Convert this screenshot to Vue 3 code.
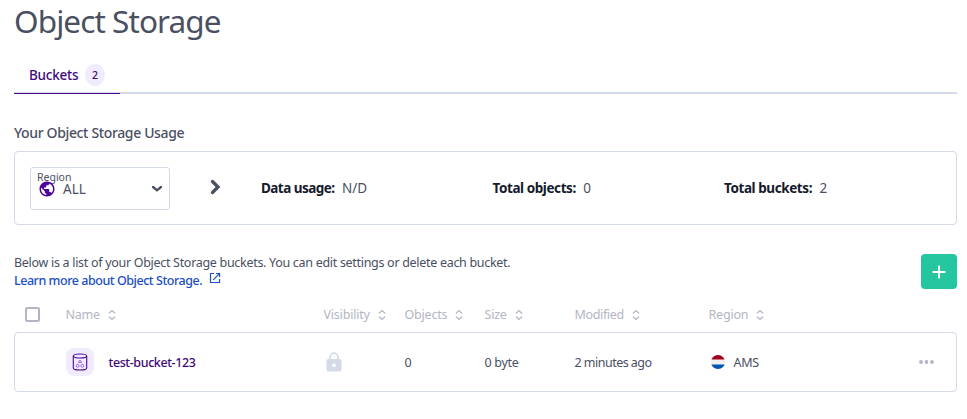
<script setup>
const stats = [
  { label: 'Data usage:', value: 'N/D', cls: 's-data' },
  { label: 'Total objects:', value: '0', cls: 's-objects' },
  { label: 'Total buckets:', value: '2', cls: 's-buckets' },
]
const columns = ['Name', 'Visibility', 'Objects', 'Size', 'Modified', 'Region']
</script>

<template>
  <main class="page">
    <h1><span>Object Storage</span></h1>
    <nav class="tabs">
      <div class="tab"><span class="tab-label">Buckets</span><span class="count">2</span></div>
    </nav>

    <h2><span>Your Object Storage Usage</span></h2>
    <section class="usage">
      <div class="select">
        <div class="select-label">Region</div>
        <div class="select-row">
          <svg class="globe" width="18" height="18" viewBox="0 0 24 24"><path fill="#4f0599" d="M12 2C6.48 2 2 6.48 2 12s4.48 10 10 10 10-4.48 10-10S17.52 2 12 2zm-1 17.93c-3.95-.49-7-3.85-7-7.93 0-.62.08-1.21.21-1.79L9 15v1c0 1.1.9 2 2 2v1.93zm6.9-2.54c-.26-.81-1-1.39-1.9-1.39h-1v-3c0-.55-.45-1-1-1H8v-2h2c.55 0 1-.45 1-1V7h2c1.1 0 2-.9 2-2v-.41c2.93 1.19 5 4.06 5 7.41 0 2.08-.8 3.97-2.1 5.39z"/></svg>
          <span class="all">ALL</span>
          <svg class="down" width="12" height="8" viewBox="0 0 12 8"><path d="M2 2l4 3.300L10 2" fill="none" stroke="#4a4f62" stroke-width="2.300" stroke-linecap="round"/></svg>
        </div>
      </div>
      <svg class="next" width="12" height="16" viewBox="0 0 12 16"><path d="M2.500 2.500L8 8l-5.500 5.500" fill="none" stroke="#4a4f62" stroke-width="3.300" stroke-linecap="round"/></svg>
      <div class="stats">
        <div v-for="s in stats" :key="s.label" class="stat" :class="s.cls"><strong>{{ s.label }}</strong><span>{{ s.value }}</span></div>
      </div>
    </section>

    <div class="intro">
      <div class="copy">
        <div class="desc">Below is a list of your Object Storage buckets. You can edit settings or delete each bucket.</div>
        <a class="learn"><span>Learn more about Object Storage.</span>
          <svg width="12" height="12" viewBox="0 0 12 12" fill="none" stroke="#1b4fc4" stroke-width="1.200"><path d="M5 1.500H1.500v9h9V7M7 1.500h3.600V5M10.400 1.700L4.300 7.800"/></svg>
        </a>
      </div>
      <button class="add"><svg width="14" height="14" viewBox="0 0 14 14"><path d="M7 .5v13M.5 7h13" stroke="#fff" stroke-width="2"/></svg></button>
    </div>

    <div class="grid head">
      <span class="box"></span>
      <div v-for="c in columns" :key="c" class="col" :class="'h-' + c.toLowerCase()">
        <span>{{ c }}</span>
        <svg width="8" height="12" viewBox="0 0 8 12"><path d="M1.300 4L4 1.500 6.700 4M1.300 8L4 10.500 6.700 8" fill="none" stroke="#b2b6c3" stroke-width="1.200" stroke-linecap="round"/></svg>
      </div>
    </div>

    <div class="grid row">
      <span></span>
      <div class="name">
        <span class="tile">
          <svg width="16" height="18" viewBox="0 0 16 18" fill="none">
            <g stroke="#4f0599" stroke-width="1.100"><ellipse cx="8" cy="3" rx="6.700" ry="2"/><path d="M1.300 3v12c0 1.100 3 2 6.700 2s6.700-.9 6.700-2V3"/></g>
            <g stroke="#a365f6" stroke-width="1"><path d="M8 7L6.300 9.500h3.400z"/><circle cx="5.700" cy="12.800" r="1.400"/><circle cx="10.300" cy="12.800" r="1.400"/></g>
          </svg>
        </span>
        <b>test-bucket-123</b>
      </div>
      <div><svg class="lock" width="16" height="20" viewBox="0 0 16 20"><path d="M4 8V5.200a4 4 0 0 1 8 0V8" fill="none" stroke="#d4dae7" stroke-width="1.800"/><rect x=".5" y="7" width="15" height="12.500" rx="2" fill="#d4dae7"/><circle cx="8" cy="13.300" r="1.900" fill="#fff"/></svg></div>
      <div class="cell">0</div>
      <div class="cell">0 byte</div>
      <div class="cell modified">2 minutes ago</div>
      <div class="region">
        <svg width="14" height="14" viewBox="0 0 14 14"><defs><clipPath id="disc"><circle cx="7" cy="7" r="7"/></clipPath></defs><g clip-path="url(#disc)"><path fill="#f0f0f0" d="M0 0h14v14H0z"/><path fill="#a2001d" d="M0 0h14v4.600H0z"/><path fill="#0052b4" d="M0 9.400h14V14H0z"/></g></svg>
        <span class="cell">AMS</span>
      </div>
      <svg class="more" width="15" height="4" viewBox="0 0 15 4" fill="#b2b6c3"><circle cx="2" cy="2" r="1.900"/><circle cx="7.500" cy="2" r="1.900"/><circle cx="13" cy="2" r="1.900"/></svg>
    </div>
  </main>
</template>

<style>
body { background: #fff; }
</style>

<style scoped>
* { box-sizing: border-box; }
.page { height: 419px; padding: 0 10px 0 14px; overflow: hidden; color: #4a4f62; font: 12.500px/18px "Noto Sans", sans-serif; letter-spacing: -.3px; white-space: nowrap; }
h1 { margin: 0; height: 57px; padding-top: 1px; font-size: 31.500px; line-height: 40px; font-weight: 400; letter-spacing: -.92px; }
.tabs { height: 37px; border-bottom: 2px solid #d4dae7; }
.tab { display: flex; align-items: center; width: 106px; height: 37px; padding-left: 15px; border-bottom: 1px solid #4f0599; color: #3f0a77; font-size: 13.500px; font-weight: 500; letter-spacing: -.25px; }
.tab-label { width: 56px; }
.count { display: grid; place-items: center; width: 20px; height: 22px; border-radius: 50%; background: #f0ebfe; font-size: 10.500px; letter-spacing: 0; }
h2 { margin: 0; height: 57px; padding-top: 29px; font-size: 14px; line-height: 20px; font-weight: 500; letter-spacing: -.36px; }
.usage { display: flex; height: 74px; padding: 15px; border: 1px solid #d4dae7; border-radius: 4px; }
.select { width: 140px; height: 43px; padding: 3px 6px; border: 1px solid #d4dae7; border-radius: 3px; }
.select-label { height: 9px; font-size: 10.500px; line-height: 12px; letter-spacing: 0; }
.select-row { display: flex; align-items: center; height: 17px; padding-left: 1px; font-size: 13.500px; letter-spacing: 0; }
.all { margin-left: 7px; }
.down { margin-left: auto; }
.next { margin: 12px 0 0 40px; }
.stats { display: grid; grid-template-columns: 231.500px 231.500px 1fr; flex: 1; margin-left: 39px; padding-top: 12px; font-size: 13.500px; letter-spacing: 0; }
.stat strong { color: #151a2d; font-weight: 700; margin-right: 7.500px; letter-spacing: -.42px; }
.s-data strong { letter-spacing: -.55px; }
.intro { display: flex; justify-content: space-between; height: 77px; padding-top: 28px; }
.copy { padding-top: 1px; }
.learn { display: flex; color: #1b4fc4; font-weight: 500; letter-spacing: -.46px; }
.learn svg { margin: 0 0 0 7px; }
.add { display: grid; place-items: center; width: 36px; height: 35px; margin-top: 1px; padding: 0; border: 0; border-radius: 4px; background: #24c6a0; }
.grid { display: grid; grid-template-columns: 51.500px 258px 81px 80px 90px 134px 1fr 30px; align-items: center; }
.head { height: 30px; color: #b2b6c3; padding-bottom: 5px; letter-spacing: -.2px; }
.h-modified { letter-spacing: -.35px; }
.box { width: 15px; height: 15px; margin-left: 11px; border: 2px solid #b2b6c3; border-radius: 2px; }
.col { display: flex; align-items: center; gap: 8px; }
.row { height: 60px; border: 1px solid #d4dae7; border-radius: 4px; grid-template-columns: 50.500px 258px 81px 80px 90px 134px 1fr 37px; }
.name { display: flex; align-items: center; color: #3f0a77; }
.name b { font-weight: 500; letter-spacing: -.4px; padding-top: 2px; }
.cell { padding-top: 2px; }
.modified { letter-spacing: -.52px; }
.tile { display: grid; place-items: center; width: 28px; height: 28px; margin-right: 15px; border-radius: 8px; background: #f0ebfe; }
.lock { display: block; margin-left: 2px; }
.region { display: flex; align-items: center; gap: 9px; padding-left: 2px; }
</style>
